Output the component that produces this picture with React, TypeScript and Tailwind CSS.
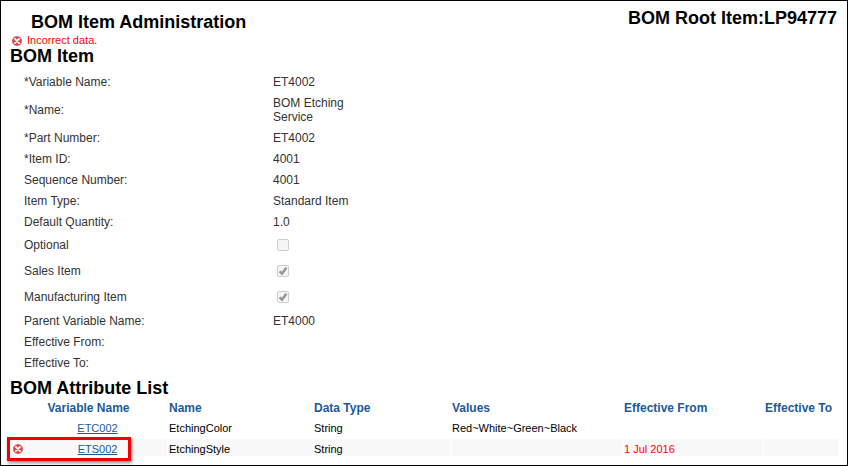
import { useId } from "react";
import clsx from "clsx";

type Field = {
  label: string;
  value?: string;
  checked?: boolean;
};

type Attribute = {
  variable: string;
  name: string;
  type: string;
  values: string;
  from: string;
  to: string;
  invalid?: boolean;
};

const FIELDS: Field[] = [
  { label: "*Variable Name:", value: "ET4002" },
  { label: "*Name:", value: "BOM Etching Service" },
  { label: "*Part Number:", value: "ET4002" },
  { label: "*Item ID:", value: "4001" },
  { label: "Sequence Number:", value: "4001" },
  { label: "Item Type:", value: "Standard Item" },
  { label: "Default Quantity:", value: "1.0" },
  { label: "Optional", checked: false },
  { label: "Sales Item", checked: true },
  { label: "Manufacturing Item", checked: true },
  { label: "Parent Variable Name:", value: "ET4000" },
  { label: "Effective From:", value: "" },
  { label: "Effective To:", value: "" },
];

const ATTRIBUTES: Attribute[] = [
  { variable: "ETC002", name: "EtchingColor", type: "String", values: "Red~White~Green~Black", from: "", to: "" },
  { variable: "ETS002", name: "EtchingStyle", type: "String", values: "", from: "1 Jul 2016", to: "", invalid: true },
];

function ErrorIcon() {
  return (
    <svg viewBox="0 0 10 10" className="block size-2.5 shrink-0" aria-hidden="true">
      <circle cx="5" cy="5" r="4.6" fill="#dc4a50" stroke="#c9474c" strokeWidth="0.6" />
      <path d="M2.9 2.9l4.2 4.2M7.1 2.9l-4.2 4.2" stroke="#fff" strokeWidth="1.6" strokeLinecap="round" />
    </svg>
  );
}

function CheckField({ label, checked }: { label: string; checked: boolean }) {
  const id = useId();
  return (
    <div className="flex h-[26px] items-center pb-0.5">
      <label htmlFor={id} className="w-[249px]">{label}</label>
      <span className="relative ml-1 size-3">
        <input
          id={id}
          type="checkbox"
          defaultChecked={checked}
          disabled
          className="peer block size-3 appearance-none rounded-xs border border-[#cdcdcd] bg-[#f5f5f5]"
        />
        <svg viewBox="0 0 12 12" className="pointer-events-none absolute inset-0 hidden size-3 peer-checked:block" aria-hidden="true">
          <path d="M2.6 6.3l2.4 2.3 4.4-5.8" fill="none" stroke="#959595" strokeWidth="2.4" />
        </svg>
      </span>
    </div>
  );
}

function TextField({ label, value }: { label: string; value?: string }) {
  return (
    <div className="flex items-center pt-[3px] pb-1">
      <span className="w-[249px]">{label}</span>
      <span className="w-24">{value}</span>
    </div>
  );
}

export default function App() {
  return (
    <main className="min-h-screen border border-black bg-white font-['Liberation_Sans',Arial,sans-serif] text-xs leading-[14px] text-[#333]">
      <header className="flex justify-between pt-[7px] pr-2.5 pl-[30px] text-lg leading-5 font-bold text-black">
        <h1 className="pt-1">BOM Item Administration</h1>
        <p>BOM Root Item:LP94777</p>
      </header>

      <p role="alert" className="flex h-4 items-center gap-[5px] pl-[11px] text-[11px] text-[#ff0000]">
        <span className="pt-0.5">
          <ErrorIcon />
        </span>
        Incorrect data.
      </p>

      <section className="pl-[9px]">
        <h2 className="text-lg leading-4 font-bold text-black">BOM Item</h2>
        <div className="mt-2 pl-3.5">
          {FIELDS.map((f) =>
            f.checked === undefined ? (
              <TextField key={f.label} label={f.label} value={f.value} />
            ) : (
              <CheckField key={f.label} label={f.label} checked={f.checked} />
            )
          )}
        </div>
      </section>

      <section className="mt-1.5 pr-[9px] pl-2">
        <h2 className="pl-px text-lg leading-4 font-bold text-black">BOM Attribute List</h2>
        <table className="w-full table-fixed border-separate border-spacing-x-px border-spacing-y-1 text-left text-[11px] leading-3 text-black">
          <colgroup>
            <col className="w-[17px]" />
            <col className="w-[139px]" />
            <col className="w-[144px]" />
            <col className="w-[137px]" />
            <col className="w-[171px]" />
            <col className="w-[140px]" />
            <col className="w-[74px]" />
          </colgroup>
          <thead className="text-xs leading-3 text-[#1c5a99]">
            <tr>
              <th colSpan={2} className="p-0 pt-0.5 text-center">Variable Name</th>
              <th className="p-0 pt-0.5 pl-px">Name</th>
              <th className="p-0 pt-0.5 pl-px">Data Type</th>
              <th className="p-0 pt-0.5 pl-px">Values</th>
              <th className="p-0 pt-0.5 pl-px">Effective From</th>
              <th className="p-0 pt-0.5 pl-px whitespace-nowrap">Effective To</th>
            </tr>
          </thead>
          <tbody>
            {ATTRIBUTES.map((a) => (
              <tr key={a.variable} className={clsx(a.invalid && "*:bg-[#f8f8f8]")}>
                <td className="relative p-0 pt-1 pb-px pl-[3px]">
                  {a.invalid && (
                    <>
                      <ErrorIcon />
                      <span className="pointer-events-none absolute -top-0.5 -left-[3px] h-6 w-[124px] border-3 border-[#f00000] shadow-[1px_2px_3px_rgba(0,0,0,0.45)]" />
                    </>
                  )}
                </td>
                <td className="p-0 pt-1 pb-px text-center">
                  <a href="#" className="text-[#1c5a99] underline">{a.variable}</a>
                </td>
                <td className="p-0 pt-1 pb-px pl-px">{a.name}</td>
                <td className="p-0 pt-1 pb-px pl-px">{a.type}</td>
                <td className="p-0 pt-1 pb-px pl-px">{a.values}</td>
                <td className={clsx("p-0 pt-1 pb-px pl-px", a.invalid && "text-[#ff0000]")}>{a.from}</td>
                <td className="p-0 pt-1 pb-px pl-px">{a.to}</td>
              </tr>
            ))}
          </tbody>
        </table>
      </section>
    </main>
  );
}
